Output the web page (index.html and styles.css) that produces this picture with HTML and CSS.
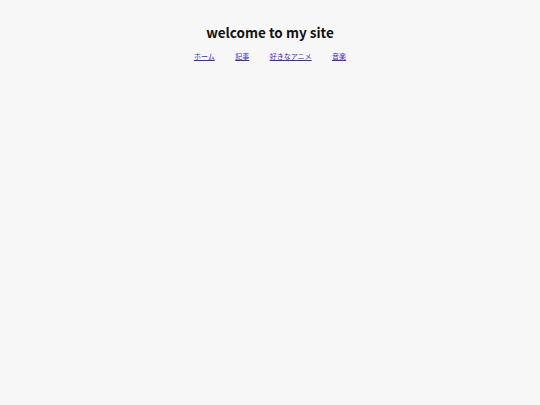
FILE: index.html
```html
<!DOCTYPE html>
<html lang="ja">
<head>
<meta charset="utf-8">
<title>welcome to my site</title>
<link rel="stylesheet" href="styles.css">
</head>
<body>
<header class="site-header">
  <h1 class="site-title">welcome to my site</h1>
  <nav class="site-nav">
    <a href="#" class="nav-link">ホーム</a>
    <a href="#" class="nav-link">記事</a>
    <a href="#" class="nav-link">好きなアニメ</a>
    <a href="#" class="nav-link">音楽</a>
  </nav>
</header>
</body>
</html>
```
FILE: styles.css
```css
html, body {
  margin: 0;
  padding: 0;
}
body {
  background: #f7f7f7;
  font-family: "Noto Sans CJK JP", "Noto Sans", sans-serif;
  color: #111;
  width: 540px;
  height: 405px;
}
.site-header {
  display: flex;
  flex-direction: column;
  align-items: center;
  padding-top: 22px;
}
.site-title {
  margin: 0;
  font-size: 13.5px;
  font-weight: 700;
  line-height: 20px;
}
.site-nav {
  display: flex;
  gap: 20.5px;
  margin-top: 9px;
  font-size: 7px;
  line-height: 10px;
}
.nav-link {
  color: #4a26b8;
  text-decoration: underline;
}
```
